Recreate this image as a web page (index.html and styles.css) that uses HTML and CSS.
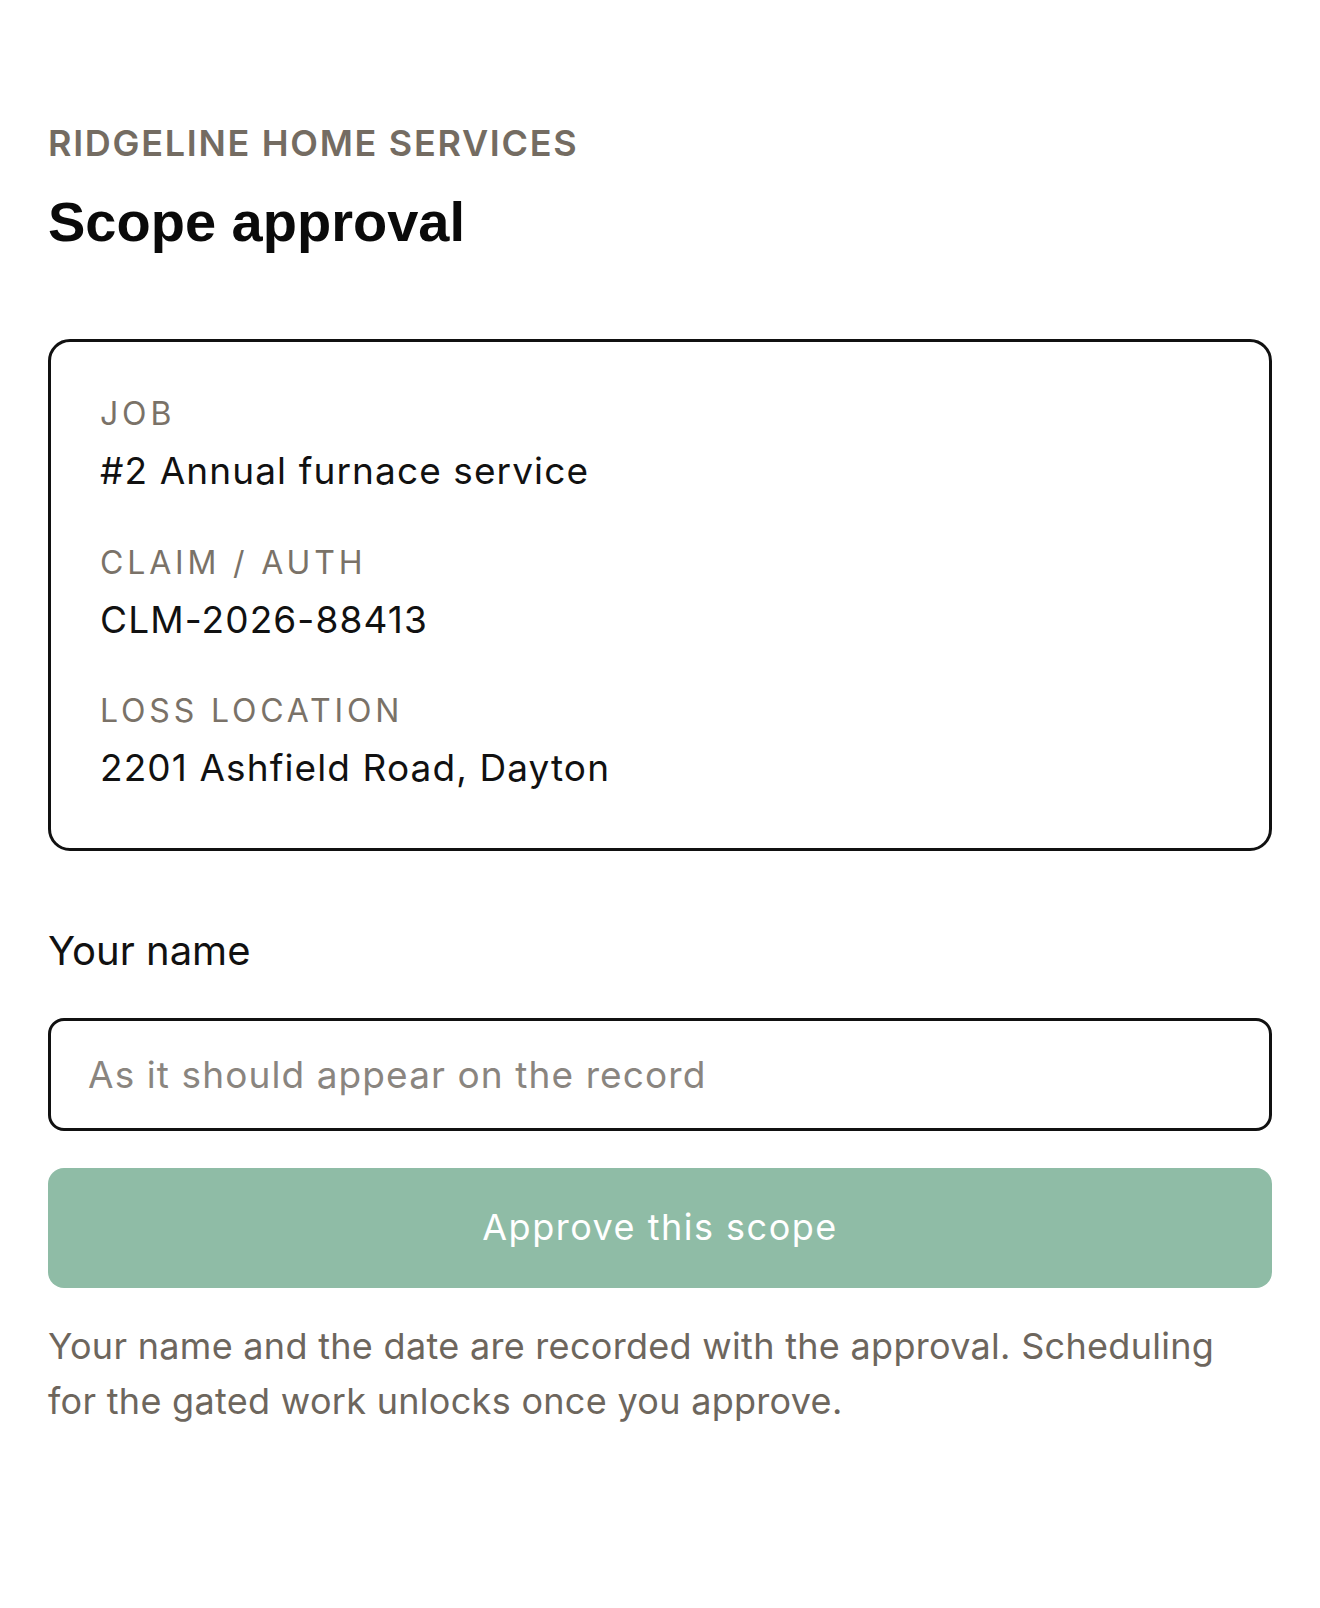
FILE: index.html
```html
<!DOCTYPE html>
<html lang="en">
<head>
  <meta charset="UTF-8">
  <title>Scope approval</title>
  <link rel="stylesheet" href="styles.css">
</head>
<body>

  <div class="pagina">
    <div class="marca">RIDGELINE HOME SERVICES</div>
    <h1 class="titulo">Scope approval</h1>

    <div class="cartao">
      <div class="item">
        <div class="rotulo">JOB</div>
        <div class="valor">#2 Annual furnace service</div>
      </div>
      <div class="item">
        <div class="rotulo">CLAIM / AUTH</div>
        <div class="valor">CLM-2026-88413</div>
      </div>
      <div class="item">
        <div class="rotulo">LOSS LOCATION</div>
        <div class="valor">2201 Ashfield Road, Dayton</div>
      </div>
    </div>

    <label class="campo-label" for="nome">Your name</label>
    <input type="text" id="nome" class="campo-input" placeholder="As it should appear on the record">

    <button class="btn-aprovar" disabled>Approve this scope</button>

    <p class="nota">Your name and the date are recorded with the approval. Scheduling for the gated work unlocks once you approve.</p>
  </div>

</body>
</html>
```

FILE: styles.css
```css
body {
  margin: 0;
  background: #fff;
  font-family: Inter, "Liberation Sans", sans-serif;
  color: #111;
}
.pagina {
  padding: 122px 48px 80px;
}
.marca {
  font-weight: 600;
  font-size: 36px;
  line-height: 1.2;
  letter-spacing: 1.7px;
  color: #746c62;
  margin-bottom: 23px;
}
.titulo {
  font-family: "Liberation Sans", Arial, sans-serif;
  font-weight: 700;
  font-size: 56px;
  line-height: 1.2;
  margin: 0 0 84px;
  color: #0a0a0a;
}
.cartao {
  border: 3px solid #111;
  border-radius: 22px;
  padding: 51px 49px 55px;
}
.item {
  margin-bottom: 46px;
}
.item:last-child {
  margin-bottom: 0;
}
.rotulo {
  font-size: 32px;
  line-height: 1.3;
  letter-spacing: 0.12em;
  color: #7a7268;
  margin-bottom: 11px;
}
.valor {
  font-size: 37px;
  line-height: 1.35;
  letter-spacing: 1.1px;
  color: #111;
}
.campo-label {
  display: block;
  margin-top: 74px;
  font-size: 40px;
  line-height: 1.3;
  color: #111;
}
.campo-input {
  display: block;
  box-sizing: border-box;
  width: 100%;
  height: 113px;
  margin-top: 41px;
  padding: 0 37px;
  border: 3px solid #111;
  border-radius: 16px;
  font-family: Inter, "Liberation Sans", sans-serif;
  font-size: 37px;
  letter-spacing: 1.1px;
  color: #111;
  background: #fff;
  outline: none;
}
.campo-input::placeholder {
  color: #8a857f;
}
.btn-aprovar {
  display: block;
  width: 100%;
  height: 120px;
  margin-top: 37px;
  padding-bottom: 3px;
  border: none;
  border-radius: 16px;
  background-color: #8fbca6;
  color: #fff;
  font-family: Inter, "Liberation Sans", sans-serif;
  font-size: 36px;
  letter-spacing: 1.5px;
  cursor: not-allowed;
}
.nota {
  max-width: 1200px;
  margin: 31px 0 0;
  font-size: 36px;
  line-height: 1.52;
  letter-spacing: 0.3px;
  color: #6d665d;
}
```
